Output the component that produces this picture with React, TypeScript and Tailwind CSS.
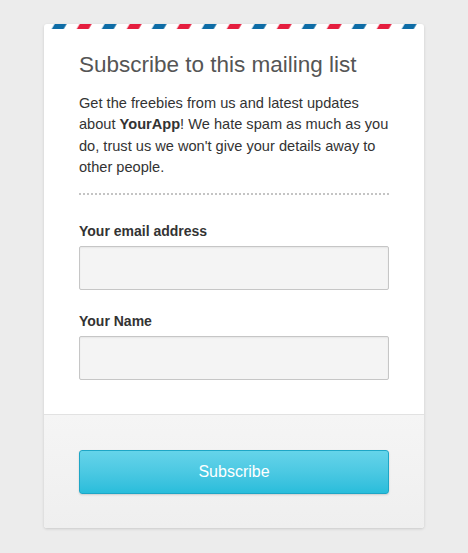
import React from "react";

function AirmailStripe() {
  return (
    <svg width="380" height="5" className="block" aria-hidden="true">
      <defs>
        <pattern id="airmail" x="7.7" y="0" width="50" height="5" patternUnits="userSpaceOnUse">
          <polygon points="3,0 15,0 12,5 0,5" fill="#0e6ca6" />
          <polygon points="28,0 40,0 37,5 25,5" fill="#e51d3e" />
        </pattern>
      </defs>
      <rect x="0" y="0" width="380" height="5" fill="url(#airmail)" />
    </svg>
  );
}

export default function App() {
  return (
    <div
      className="min-h-[553px] w-full bg-[#ececec] pt-[24px]"
      style={{ fontFamily: '"Liberation Sans", Arial, sans-serif' }}
    >
      <div className="mx-auto w-[380px] bg-white rounded-[3px] shadow-[0_1px_3px_rgba(0,0,0,0.15)] overflow-hidden">
        <AirmailStripe />
        <div className="px-[35px] pt-[22px] pb-[34px]">
          <h1 className="text-[22.5px] leading-[28px] text-[#555] font-normal">
            Subscribe to this mailing list
          </h1>
          <p className="mt-[14px] text-[14.6px] leading-[21.3px] text-[#333]">
            Get the freebies from us and latest updates about <b>YourApp</b>! We hate spam as much as you do, trust us we won't give your details away to other people.
          </p>
          <div className="mt-[15px] border-t-2 border-dotted border-[#c4c4c4]" />
          <label className="block mt-[27px] text-[14px] leading-[18px] font-bold text-[#333]">
            Your email address
          </label>
          <input
            type="text"
            className="mt-[6px] block w-full h-[44px] bg-[#f4f4f4] border border-[#c6c6c6] rounded-[2px] shadow-[inset_0_1px_2px_rgba(0,0,0,0.06)] outline-none"
          />
          <label className="block mt-[22px] text-[14px] leading-[18px] font-bold text-[#333]">
            Your Name
          </label>
          <input
            type="text"
            className="mt-[6px] block w-full h-[44px] bg-[#f4f4f4] border border-[#c6c6c6] rounded-[2px] shadow-[inset_0_1px_2px_rgba(0,0,0,0.06)] outline-none"
          />
        </div>
        <div className="border-t border-[#e2e2e2] bg-gradient-to-b from-[#f5f5f5] to-[#efefef] px-[35px] pt-[35px] pb-[34px]">
          <button className="block w-full h-[44px] rounded-[3px] border border-[#1ea6c6] bg-gradient-to-b from-[#65d4ea] to-[#28bddb] text-white text-[16px] shadow-[0_1px_2px_rgba(0,0,0,0.15)]">
            Subscribe
          </button>
        </div>
      </div>
    </div>
  );
}
